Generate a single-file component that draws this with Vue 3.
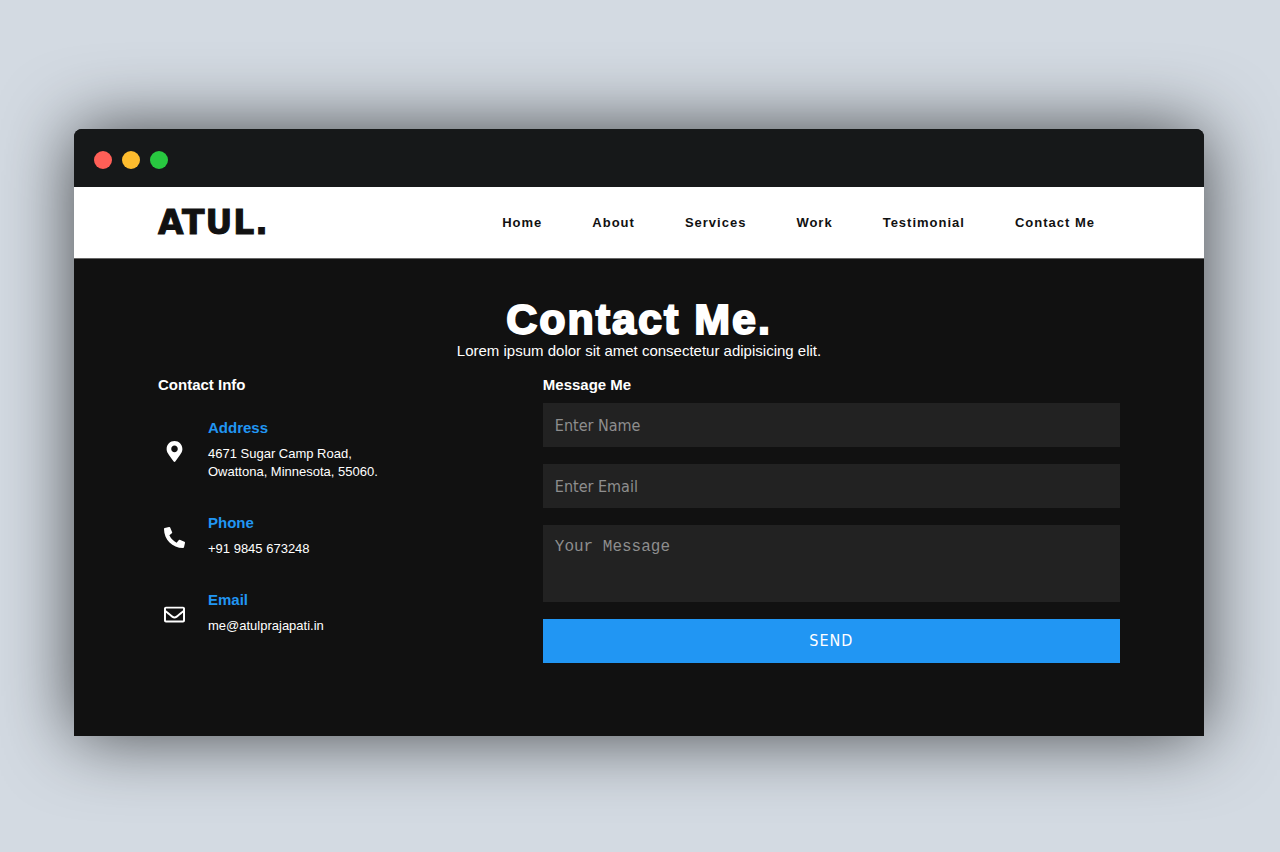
<script setup>
import { ref } from 'vue'

const links = ['Home', 'About', 'Services', 'Work', 'Testimonial', 'Contact Me']
const name = ref('')
const email = ref('')
const message = ref('')
</script>

<template>
  <div class="backdrop">
    <div class="window">
      <div class="titlebar">
        <span class="dot red"></span>
        <span class="dot amber"></span>
        <span class="dot green"></span>
      </div>
      <header class="navbar">
        <a href="#" class="logo">ATUL.</a>
        <nav class="links">
          <a v-for="link in links" :key="link" href="#">{{ link }}</a>
        </nav>
      </header>
      <main class="contact">
        <h1>Contact Me.</h1>
        <p class="lead">Lorem ipsum dolor sit amet consectetur adipisicing elit.</p>
        <div class="columns">
          <section>
            <h2>Contact Info</h2>
            <div class="info address">
              <svg class="icon" viewBox="0 0 384 512" aria-hidden="true">
                <path d="M172.268 501.67C26.97 291.031 0 269.413 0 192 0 85.961 85.961 0 192 0s192 85.961 192 192c0 77.413-26.97 99.031-172.268 309.67-9.535 13.774-29.93 13.773-39.464 0zM192 272c44.183 0 80-35.817 80-80s-35.817-80-80-80-80 35.817-80 80 35.817 80 80 80z" />
              </svg>
              <div>
                <h3>Address</h3>
                <p>4671 Sugar Camp Road,<br />Owattona, Minnesota, 55060.</p>
              </div>
            </div>
            <div class="info">
              <svg class="icon" viewBox="0 0 512 512" aria-hidden="true">
                <path d="M497.39 361.8l-112-48a24 24 0 0 0-28 6.9l-49.6 60.6A370.66 370.66 0 0 1 130.6 204.11l60.6-49.6a23.94 23.94 0 0 0 6.9-28l-48-112A24.16 24.16 0 0 0 122.6.61l-104 24A24 24 0 0 0 0 48c0 256.5 207.9 464 464 464a24 24 0 0 0 23.4-18.6l24-104a24.29 24.29 0 0 0-14.01-27.6z" />
              </svg>
              <div>
                <h3>Phone</h3>
                <p>+91 9845 673248</p>
              </div>
            </div>
            <div class="info">
              <svg class="icon" viewBox="0 0 512 512" aria-hidden="true">
                <path d="M464 64H48C21.490 64 0 85.490 0 112v288c0 26.510 21.490 48 48 48h416c26.510 0 48-21.490 48-48V112c0-26.510-21.490-48-48-48zm0 48v40.805c-22.422 18.259-58.168 46.651-134.587 106.490-16.841 13.247-50.201 45.072-73.413 44.701-23.208.375-56.579-31.459-73.413-44.701C106.180 199.465 70.425 171.067 48 152.805V112h416zM48 400V214.398c22.914 18.251 55.409 43.862 104.938 82.646 21.857 17.205 60.134 55.186 103.062 54.955 42.717.231 80.509-37.199 103.053-54.947 49.528-38.783 82.032-64.401 104.947-82.653V400H48z" />
              </svg>
              <div>
                <h3>Email</h3>
                <p>me@atulprajapati.in</p>
              </div>
            </div>
          </section>
          <section>
            <h2>Message Me</h2>
            <form @submit.prevent>
              <input v-model="name" type="text" placeholder="Enter Name" aria-label="Enter Name" />
              <input v-model="email" type="email" placeholder="Enter Email" aria-label="Enter Email" />
              <textarea v-model="message" placeholder="Your Message" aria-label="Your Message"></textarea>
              <button type="submit">SEND</button>
            </form>
          </section>
        </div>
      </main>
    </div>
  </div>
</template>

<style>
body {
  background: #d3dae2;
}
</style>

<style scoped>
* {
  box-sizing: border-box;
  margin: 0;
}
.backdrop {
  min-height: 100vh;
  padding: 129px 76px 116px 74px;
  font-family: "Liberation Sans", Arial, sans-serif;
}
.window {
  background: #111;
  border-radius: 8px 8px 0 0;
  overflow: hidden;
  box-shadow: 0 0 72px rgba(0, 0, 0, 0.68);
}
.titlebar {
  display: flex;
  align-items: center;
  gap: 10px;
  height: 58px;
  padding: 4px 20px 0;
  background: #161819;
}
.dot {
  width: 18px;
  height: 18px;
  border-radius: 50%;
}
.red { background: #ff5f57; }
.amber { background: #febc2e; }
.green { background: #28c840; }
.navbar {
  display: flex;
  align-items: center;
  justify-content: space-between;
  height: 72px;
  padding: 0 84px;
  background: #fff;
  border-bottom: 1px solid #666;
}
a {
  text-decoration: none;
}
.logo {
  font: bold 33px "DejaVu Sans", Verdana, sans-serif;
  letter-spacing: 1px;
  color: #111;
  -webkit-text-stroke: 1px #111;
}
.links {
  display: flex;
}
.links a {
  padding: 0 25px;
  font-size: 13px;
  font-weight: bold;
  letter-spacing: 1px;
  color: #111;
}
.contact {
  padding: 36px 84px 73px;
  color: #fff;
}
h1 {
  font-size: 43px;
  line-height: 48px;
  letter-spacing: 2px;
  text-align: center;
  -webkit-text-stroke: 2px #fff;
}
.lead {
  font-size: 15px;
  line-height: 16px;
  text-align: center;
}
.columns {
  display: grid;
  grid-template-columns: 2fr 3fr;
  margin-top: 16px;
}
h2 {
  font-size: 15px;
  line-height: 20px;
}
.info {
  display: flex;
  align-items: center;
  padding-top: 32px;
}
.info.address {
  padding-top: 24px;
}
.icon {
  width: 33px;
  height: 21px;
  margin: 2px 17px 0 0;
  fill: #fff;
}
h3 {
  font-size: 15px;
  line-height: 18px;
  color: #2196f3;
}
.info p {
  padding: 8px 0 1px;
  font-size: 13px;
  line-height: 18px;
}
form {
  display: flex;
  flex-direction: column;
  gap: 17px;
  padding-top: 8px;
}
input,
textarea,
button {
  display: block;
  width: 100%;
  border: 0;
  border-radius: 0;
  padding: 12px;
  font: 16px/20px "DejaVu Sans Condensed", "DejaVu Sans", Tahoma, sans-serif;
}
input,
textarea {
  background: #222;
  color: #fff;
}
input,
button {
  height: 44px;
}
textarea {
  height: 77px;
  font-family: "Liberation Mono", "Courier New", monospace;
  resize: none;
}
input::placeholder,
textarea::placeholder {
  color: #8e8e8e;
}
button {
  background: #2196f3;
  color: #fff;
  letter-spacing: 1px;
}
</style>
